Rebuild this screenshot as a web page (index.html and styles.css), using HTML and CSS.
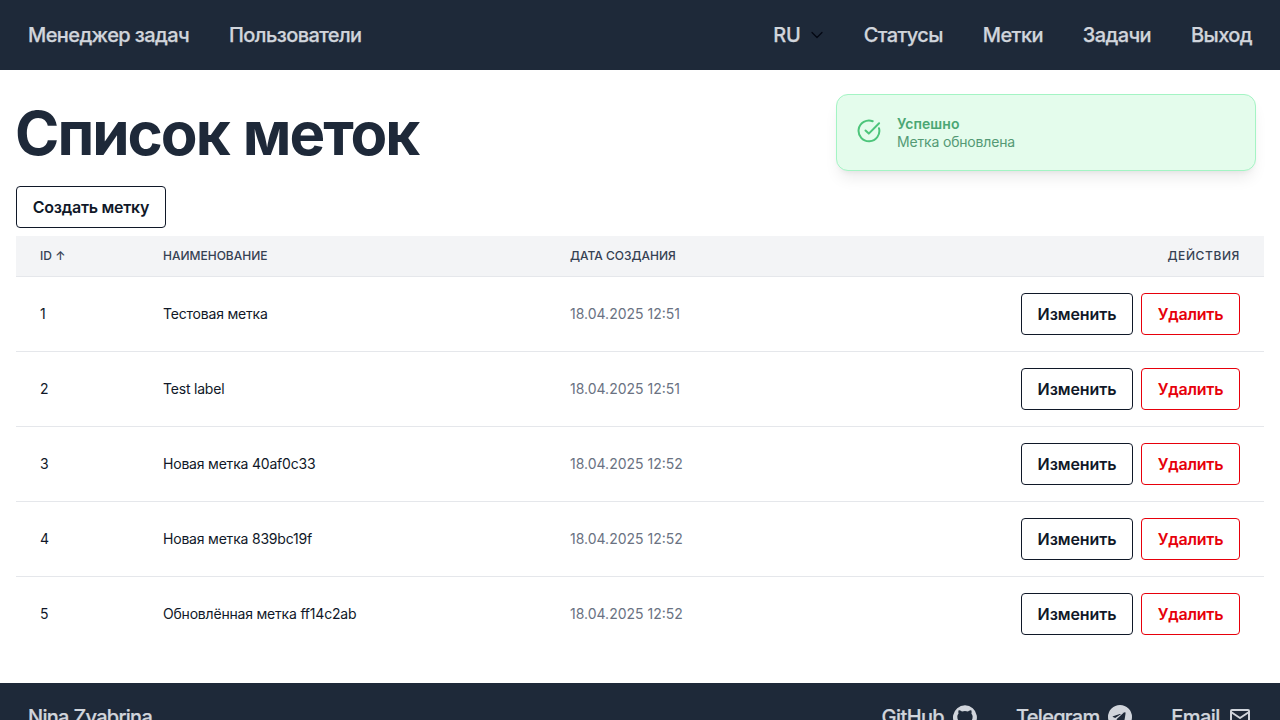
FILE: index.html
```html
<!DOCTYPE html>
<html lang="ru">
<head>
<meta charset="utf-8">
<title>Менеджер задач</title>
<link rel="stylesheet" href="styles.css">
</head>
<body>
<div class="app">
  <nav class="navbar">
    <div class="nav-group">
      <a class="nav-link">Менеджер задач</a>
      <a class="nav-link">Пользователи</a>
    </div>
    <div class="nav-group">
      <a class="nav-link lang">RU
        <svg class="chevron" viewBox="0 0 14 14" fill="none" stroke="currentColor" stroke-width="1.2" stroke-linecap="round" stroke-linejoin="round"><path d="M2 4.5l5 5 5-5"/></svg>
      </a>
      <a class="nav-link">Статусы</a>
      <a class="nav-link">Метки</a>
      <a class="nav-link">Задачи</a>
      <a class="nav-link">Выход</a>
    </div>
  </nav>
  <main class="content">
    <h1 class="title">Список меток</h1>
    <button class="btn create">Создать метку</button>
    <table class="table">
      <colgroup><col class="col-id"><col class="col-name"><col class="col-date"><col></colgroup>
      <thead>
        <tr><th>ID ↑</th><th>Наименование</th><th>Дата создания</th><th class="actions-head">Действия</th></tr>
      </thead>
      <tbody>
        <tr><td>1</td><td class="name">Тестовая метка</td><td class="date">18.04.2025 12:51</td><td><div class="actions"><button class="btn edit">Изменить</button><button class="btn danger">Удалить</button></div></td></tr>
        <tr><td>2</td><td class="name">Test label</td><td class="date">18.04.2025 12:51</td><td><div class="actions"><button class="btn edit">Изменить</button><button class="btn danger">Удалить</button></div></td></tr>
        <tr><td>3</td><td class="name">Новая метка 40af0c33</td><td class="date">18.04.2025 12:52</td><td><div class="actions"><button class="btn edit">Изменить</button><button class="btn danger">Удалить</button></div></td></tr>
        <tr><td>4</td><td class="name">Новая метка 839bc19f</td><td class="date">18.04.2025 12:52</td><td><div class="actions"><button class="btn edit">Изменить</button><button class="btn danger">Удалить</button></div></td></tr>
        <tr><td>5</td><td class="name">Обновлённая метка ff14c2ab</td><td class="date">18.04.2025 12:52</td><td><div class="actions"><button class="btn edit">Изменить</button><button class="btn danger">Удалить</button></div></td></tr>
      </tbody>
    </table>
  </main>
  <footer class="footer">
    <span class="author">Nina Zyabrina</span>
    <div class="footer-links">
      <a class="footer-link">GitHub
        <svg class="icon" viewBox="0 0 24 24" fill="currentColor"><path d="M12 .3a12 12 0 0 0-3.8 23.38c.6.12.83-.26.83-.57L9 21.07c-3.34.72-4.04-1.61-4.04-1.61-.55-1.39-1.34-1.76-1.34-1.76-1.08-.74.09-.73.09-.73 1.2.09 1.83 1.24 1.83 1.24 1.08 1.83 2.81 1.3 3.5 1 .1-.78.42-1.31.76-1.61-2.67-.3-5.47-1.33-5.47-5.93 0-1.31.47-2.38 1.24-3.22-.14-.3-.54-1.52.1-3.18 0 0 1-.32 3.3 1.23a11.5 11.5 0 0 1 6 0c2.28-1.55 3.29-1.23 3.29-1.23.64 1.66.24 2.88.12 3.18a4.65 4.65 0 0 1 1.23 3.22c0 4.61-2.8 5.63-5.48 5.92.42.36.81 1.1.81 2.22l-.01 3.29c0 .31.2.69.82.57A12 12 0 0 0 12 .3"/></svg>
      </a>
      <a class="footer-link telegram">Telegram
        <svg class="icon" viewBox="0 0 24 24" fill="currentColor"><path fill-rule="evenodd" d="M12 0a12 12 0 1 0 0 24 12 12 0 0 0 0-24Zm4.9 7.2c.45-.05.73.15.66.75-.2 2.4-1.05 7.25-1.7 9.65-.27 1.02-.8 1.36-1.3 1.1l-3.65-2.65-1.85 1.75c-.35.3-.6.2-.65-.35l.35-3.5 6.6-6c.3-.27-.05-.4-.43-.17L7.2 12.9l-2.2-.8c-.5-.25-.45-.6.1-.9Z"/></svg>
      </a>
      <a class="footer-link">Email
        <svg class="icon" viewBox="0 0 24 24" fill="none" stroke="currentColor" stroke-width="2" stroke-linecap="round" stroke-linejoin="round"><rect x="3" y="5" width="18" height="14" rx="1"/><path d="M3 7l9 6 9-6"/></svg>
      </a>
    </div>
  </footer>
  <div class="toast">
    <svg class="toast-icon" viewBox="0 0 24 24" fill="none" stroke="currentColor" stroke-width="2" stroke-linecap="round" stroke-linejoin="round"><path d="M15.7 2.2A10.4 10.4 0 1 0 22 9.2"/><path d="M8.5 11.5l3.3 3.1L22.1 4.2"/></svg>
    <div class="toast-body">
      <span class="toast-title">Успешно</span>
      <span class="toast-text">Метка обновлена</span>
    </div>
  </div>
</div>
</body>
</html>
```
FILE: styles.css
```css
* { box-sizing: border-box; }
body { margin: 0; background: #fff; color: #101828; font-family: Inter, "Liberation Sans", sans-serif; }
.app { position: relative; height: 720px; overflow: hidden; display: flex; flex-direction: column; }
.navbar { flex: none; height: 70px; padding: 0 28px; background: #1e2939; display: flex; justify-content: space-between; align-items: center; }
.nav-group { display: flex; align-items: center; gap: 40px; }
.nav-link { color: #d1d5dc; font-size: 20px; line-height: 28px; font-weight: 500; letter-spacing: -0.6px; -webkit-text-stroke: 0.25px currentColor; white-space: nowrap; }
.lang { display: flex; align-items: center; gap: 9px; letter-spacing: -0.2px; }
.chevron { width: 14px; height: 14px; color: #030712; }
.content { flex: none; height: 613px; padding: 33px 16px 0; }
.title { margin: 0; height: 61px; font-size: 60px; line-height: 60px; font-weight: 700; letter-spacing: -2px; word-spacing: 2px; text-indent: -1px; color: #1e2939; }
.btn { height: 42px; padding: 0; border: 1px solid currentColor; border-radius: 4px; background: #fff; color: #101828; font-family: inherit; font-size: 16px; line-height: 24px; font-weight: 600; letter-spacing: -0.08px; white-space: nowrap; }
.create { display: block; width: 150px; margin: 22px 0 8px; letter-spacing: -0.25px; }
.table { width: 100%; table-layout: fixed; border-collapse: separate; border-spacing: 0; }
.col-id { width: 123px; }
.col-name { width: 407px; }
.col-date { width: 300px; }
th { height: 41px; padding: 0 24px; background: #f3f4f6; border-bottom: 1px solid #e5e7eb; color: #364153; font-size: 12px; line-height: 16px; font-weight: 500; text-align: left; text-transform: uppercase; white-space: nowrap; }
.actions-head { text-align: right; letter-spacing: 0.6px; }
td { height: 75px; padding: 0 24px; border-bottom: 1px solid #e5e7eb; font-size: 14px; line-height: 20px; white-space: nowrap; }
tr:last-child td { height: 74px; border-bottom: 0; }
.name { letter-spacing: -0.2px; }
.date { color: #6a7282; }
.actions { display: flex; justify-content: flex-end; gap: 8px; }
.edit { width: 112px; }
.danger { width: 99px; color: #e7000b; letter-spacing: -0.25px; }
.footer { flex: none; height: 68px; padding: 0 28px; background: #1e2939; color: #d1d5dc; display: flex; align-items: center; justify-content: space-between; font-size: 20px; line-height: 28px; font-weight: 500; letter-spacing: -0.6px; -webkit-text-stroke: 0.25px currentColor; }
.author { letter-spacing: -0.7px; }
.footer-links { display: flex; gap: 39.5px; }
.footer-link { display: flex; align-items: center; gap: 8.4px; }
.telegram { letter-spacing: -0.72px; }
.icon { width: 24px; height: 24px; -webkit-text-stroke: 0; }
.toast { position: absolute; left: 836px; top: 94px; width: 420px; height: 77px; padding: 20px; display: flex; border: 1px solid #a4f4c4; border-radius: 12px; background: #e4fcec; box-shadow: 0 10px 15px -3px rgba(0, 0, 0, .08), 0 4px 6px -4px rgba(0, 0, 0, .08); }
.toast-icon { width: 24px; height: 24px; margin-top: 4px; color: #4dc57b; }
.toast-body { display: flex; flex-direction: column; margin-left: 16px; font-size: 14px; line-height: 18px; }
.toast-title { font-weight: 600; letter-spacing: 0.1px; color: #4ba774; }
.toast-text { letter-spacing: -0.17px; color: #549a75; }
```
